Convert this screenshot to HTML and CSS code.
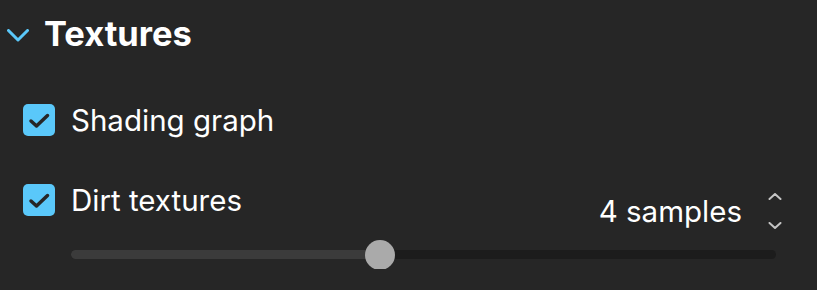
FILE: index.html
```html
<!DOCTYPE html>
<html lang="en">
<head>
  <meta charset="UTF-8">
  <meta name="viewport" content="width=device-width, initial-scale=1.0">
  <title>Textures</title>
  <link rel="stylesheet" href="styles.css">
</head>
<body>
  <div class="panel">
    <div class="section-head">
      <svg class="chevron" width="22" height="13" viewBox="0 0 22 13">
        <path d="M1.5 1.5 L11 11 L20.5 1.5" fill="none" stroke="#5ac8fa" stroke-width="3" stroke-linecap="round" stroke-linejoin="round"/>
      </svg>
      <h2>Textures</h2>
    </div>

    <div class="option">
      <span class="check">
        <svg width="32" height="32" viewBox="0 0 32 32">
          <path d="M8 17 L13.5 22 L24.5 11.5" fill="none" stroke="#262626" stroke-width="3.5" stroke-linecap="round" stroke-linejoin="round"/>
        </svg>
      </span>
      <span class="option-label">Shading graph</span>
    </div>

    <div class="option option-dirt">
      <span class="check">
        <svg width="32" height="32" viewBox="0 0 32 32">
          <path d="M8 17 L13.5 22 L24.5 11.5" fill="none" stroke="#262626" stroke-width="3.5" stroke-linecap="round" stroke-linejoin="round"/>
        </svg>
      </span>
      <div class="option-body">
        <div class="option-row">
          <span class="option-label">Dirt textures</span>
          <div class="samples">
            <span class="samples-value">4 samples</span>
            <span class="spinner">
              <svg width="14" height="7" viewBox="0 0 14 7"><path d="M1.5 6 L7 1 L12.5 6" fill="none" stroke="#c4c4c4" stroke-width="2" stroke-linecap="round" stroke-linejoin="round"/></svg>
              <svg width="14" height="7" viewBox="0 0 14 7"><path d="M1.5 1 L7 6 L12.5 1" fill="none" stroke="#c4c4c4" stroke-width="2" stroke-linecap="round" stroke-linejoin="round"/></svg>
            </span>
          </div>
        </div>
        <div class="slider">
          <div class="slider-track">
            <div class="slider-fill" style="width: 43.8%"></div>
            <div class="slider-thumb" style="left: 43.8%"></div>
          </div>
        </div>
      </div>
    </div>
  </div>
</body>
</html>
```

FILE: styles.css
```css
body {
  margin: 0;
  padding: 0;
  background: #262626;
  color: #ffffff;
  font-family: Inter, "Noto Sans", sans-serif;
}
.panel {
  padding: 12px 35px 0 7px;
}
.section-head {
  display: flex;
  align-items: center;
  gap: 15px;
  height: 44px;
}
.chevron {
  margin-top: 2px;
}
.section-head h2 {
  margin: 0;
  font-size: 34.5px;
  font-weight: 700;
  line-height: 44px;
}
.option {
  display: flex;
  align-items: center;
  gap: 16px;
  padding-left: 16px;
  height: 40px;
  margin-top: 44px;
}
.check {
  width: 32px;
  height: 32px;
  flex: none;
  border-radius: 5px;
  background-color: #5ac8fa;
}
.check svg {
  display: block;
}
.option-label {
  font-size: 29.5px;
  line-height: 40px;
}
.option-dirt {
  align-items: flex-start;
  height: auto;
  margin-top: 40px;
}
.option-dirt .check {
  margin-top: 4px;
}
.option-body {
  flex: 1;
}
.option-row {
  display: flex;
  align-items: flex-start;
}
.samples {
  display: flex;
  align-items: center;
  gap: 26px;
  margin-left: auto;
  margin-top: 13px;
}
.samples-value {
  font-size: 29.5px;
  line-height: 36px;
}
.spinner {
  display: flex;
  flex-direction: column;
  gap: 22px;
}
.spinner svg {
  display: block;
}
.slider {
  margin-top: 11px;
  padding: 10px 6px 10px 0;
}
.slider-track {
  position: relative;
  height: 9px;
  border-radius: 5px;
  background-color: #1c1c1c;
}
.slider-fill {
  height: 100%;
  border-radius: 5px;
  background-color: #3b3b3b;
}
.slider-thumb {
  position: absolute;
  top: 50%;
  width: 30px;
  height: 30px;
  margin: -15px 0 0 -15px;
  border-radius: 50%;
  background-color: #aaaaaa;
}
```
